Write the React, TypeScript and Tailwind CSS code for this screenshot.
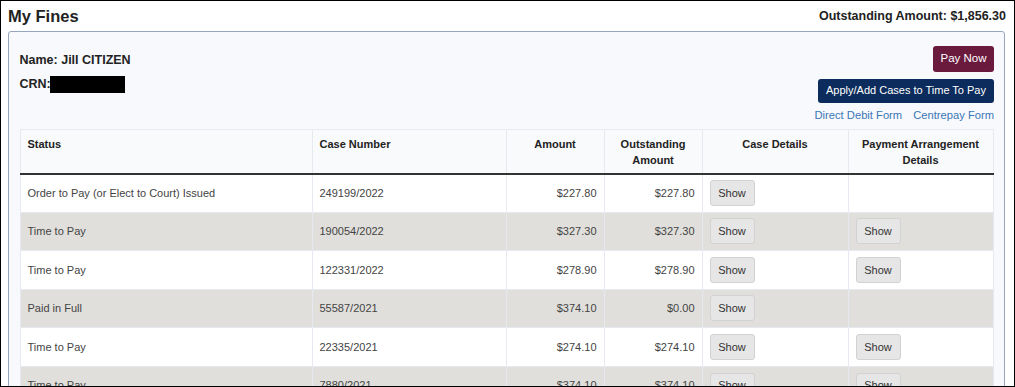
import React from "react";

type Fine = {
  status: string;
  caseNo: string;
  amount: string;
  outstanding: string;
  arrangement: boolean;
};

const FINES: Fine[] = [
  { status: "Order to Pay (or Elect to Court) Issued", caseNo: "249199/2022", amount: "$227.80", outstanding: "$227.80", arrangement: false },
  { status: "Time to Pay", caseNo: "190054/2022", amount: "$327.30", outstanding: "$327.30", arrangement: true },
  { status: "Time to Pay", caseNo: "122331/2022", amount: "$278.90", outstanding: "$278.90", arrangement: true },
  { status: "Paid in Full", caseNo: "55587/2021", amount: "$374.10", outstanding: "$0.00", arrangement: false },
  { status: "Time to Pay", caseNo: "22335/2021", amount: "$274.10", outstanding: "$274.10", arrangement: true },
  { status: "Time to Pay", caseNo: "7880/2021", amount: "$374.10", outstanding: "$374.10", arrangement: true },
];

function ShowButton() {
  return (
    <button className="h-[26px] w-[45px] rounded-[3px] border border-[#d2d2d2] bg-[#e6e6e6] text-[11px] text-[#333]">
      Show
    </button>
  );
}

const TH = "border-x border-[#e6e9ef] px-[7px] pt-[6px] pb-[5px] align-top text-[11px] font-bold leading-[16px] text-[#222]";
const TD = "border-x border-[#e6e9ef] px-[7px] py-0 h-[38.5px] text-[11px] text-[#444] align-middle";

export default function App() {
  return (
    <div
      className="h-[387px] w-[1015px] overflow-hidden border-[1.5px] border-black bg-white"
      style={{ fontFamily: '"Liberation Sans", Arial, sans-serif' }}
    >
      {/* Title bar */}
      <div className="flex h-[29.5px] items-center justify-between px-[7px]">
        <h1 className="text-[16.5px] font-bold leading-[20px] text-[#222]">My Fines</h1>
        <span className="pr-[1px] text-[12.5px] font-bold leading-[20px] text-[#222]">
          Outstanding Amount: $1,856.30
        </span>
      </div>

      {/* Panel */}
      <div className="ml-[6.5px] mr-[9px] rounded-[3px] border border-[#97a6bc] bg-[#f8f9fd] pl-[11px] pr-[10px] pt-[14px] pb-10">
        <div className="flex justify-between">
          <div className="pt-[6px] text-[12.5px] font-bold text-[#222]">
            <div className="leading-[16px]">Name: Jill CITIZEN</div>
            <div className="mt-[8px] flex items-center leading-[16px]">
              CRN:<span className="-ml-[1px] inline-block h-[17px] w-[75px] bg-black" />
            </div>
          </div>
          <div className="flex flex-col items-end">
            <button className="h-[26px] w-[61px] rounded-[3px] bg-[#6a1a3d] text-[11.5px] text-white">
              Pay Now
            </button>
            <button className="mt-[7px] h-[24px] w-[176px] rounded-[3px] bg-[#0b2c5c] text-[11px] text-white">
              Apply/Add Cases to Time To Pay
            </button>
            <div className="mt-[4px] flex gap-[11px] text-[11.2px] leading-[16px] text-[#3a77b6]">
              <span>Direct Debit Form</span>
              <span>Centrepay Form</span>
            </div>
          </div>
        </div>

        <table className="mt-[6px] w-[973px] table-fixed border-collapse border-t border-[#e6e9ef]">
          <colgroup>
            <col className="w-[292px]" />
            <col className="w-[194px]" />
            <col className="w-[98px]" />
            <col className="w-[98px]" />
            <col className="w-[146px]" />
            <col className="w-[145px]" />
          </colgroup>
          <thead>
            <tr className="border-b-2 border-b-[#333] bg-[#f9fafc]">
              <th className={`${TH} text-left`}>Status</th>
              <th className={`${TH} text-left`}>Case Number</th>
              <th className={`${TH} text-center`}>Amount</th>
              <th className={`${TH} text-center`}>Outstanding Amount</th>
              <th className={`${TH} text-center`}>Case Details</th>
              <th className={`${TH} text-center`}>Payment Arrangement Details</th>
            </tr>
          </thead>
          <tbody>
            {FINES.map((f, i) => (
              <tr
                key={f.caseNo}
                className={`border-t border-[#e6e9ef] ${i % 2 === 1 ? "bg-[#e0dfdb]" : "bg-white"}`}
              >
                <td className={`${TD} text-left`}>{f.status}</td>
                <td className={`${TD} text-left`}>{f.caseNo}</td>
                <td className={`${TD} text-right`}>{f.amount}</td>
                <td className={`${TD} text-right`}>{f.outstanding}</td>
                <td className={`${TD} px-[6px]`}>
                  <ShowButton />
                </td>
                <td className={`${TD} px-[6px]`}>{f.arrangement && <ShowButton />}</td>
              </tr>
            ))}
          </tbody>
        </table>
      </div>
    </div>
  );
}
